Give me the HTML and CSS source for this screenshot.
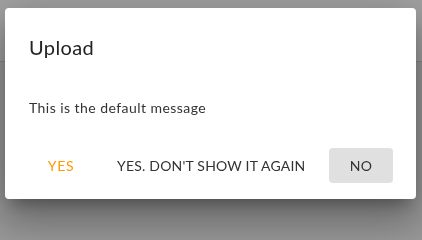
FILE: index.html
```html
<!DOCTYPE html>
<html>
<head>
<meta charset="utf-8">
<link rel="stylesheet" href="styles.css">
</head>
<body>
<div class="page">
  <div class="appbar"></div>
  <div class="content"></div>
</div>
<div class="overlay">
  <div class="dialog" role="dialog">
    <h2 class="dialog-title">Upload</h2>
    <p class="dialog-text">This is the default message</p>
    <div class="dialog-actions">
      <button class="btn btn-primary">Yes</button>
      <button class="btn btn-wide">Yes. Don't show it again</button>
      <button class="btn btn-filled">No</button>
    </div>
  </div>
</div>
</body>
</html>
```
FILE: styles.css
```css
html, body {
  margin: 0;
  padding: 0;
  height: 100%;
}
body {
  font-family: Lato, "Open Sans", sans-serif;
  background: #9d9d9d;
  overflow: hidden;
}
.page {
  height: 100%;
  display: flex;
  flex-direction: column;
}
.appbar {
  height: 61px;
  background: #a2a2a2;
  border-bottom: 1px solid #8b8b8b;
  flex: none;
}
.content {
  flex: 1;
  background: #9a9a9a;
}
.overlay {
  position: fixed;
  inset: 0;
  display: flex;
  justify-content: flex-start;
  align-items: flex-start;
  padding: 8px 0 0 5px;
}
.dialog {
  width: 411px;
  height: 191px;
  box-sizing: border-box;
  background: #fff;
  border-radius: 4px;
  display: flex;
  flex-direction: column;
  box-shadow: 0 11px 15px -7px rgba(0,0,0,0.3), 0 24px 38px 3px rgba(0,0,0,0.2), 0 9px 46px 8px rgba(0,0,0,0.16);
}
.dialog-title {
  margin: 0;
  padding: 23px 24px 0;
  font-size: 20px;
  font-weight: 400;
  line-height: 32px;
  letter-spacing: 0.4px;
  color: #222;
}
.dialog-text {
  margin: 0;
  padding: 35px 24px 0;
  font-size: 14px;
  line-height: 20px;
  letter-spacing: 0.45px;
  color: #333;
}
.dialog-actions {
  margin-top: auto;
  padding: 0 23px 16px 24px;
  display: flex;
  gap: 8px;
}
.btn {
  font-family: inherit;
  font-size: 14px;
  text-transform: uppercase;
  color: #333;
  background: transparent;
  border: none;
  border-radius: 4px;
  min-width: 64px;
  height: 35px;
  padding: 0 16px;
  letter-spacing: 0.2px;
  white-space: nowrap;
}
.btn-wide {
  flex: 1;
}
.btn-primary {
  color: #ff9800;
  letter-spacing: 0.7px;
}
.btn-filled {
  background: #e0e0e0;
}
```
